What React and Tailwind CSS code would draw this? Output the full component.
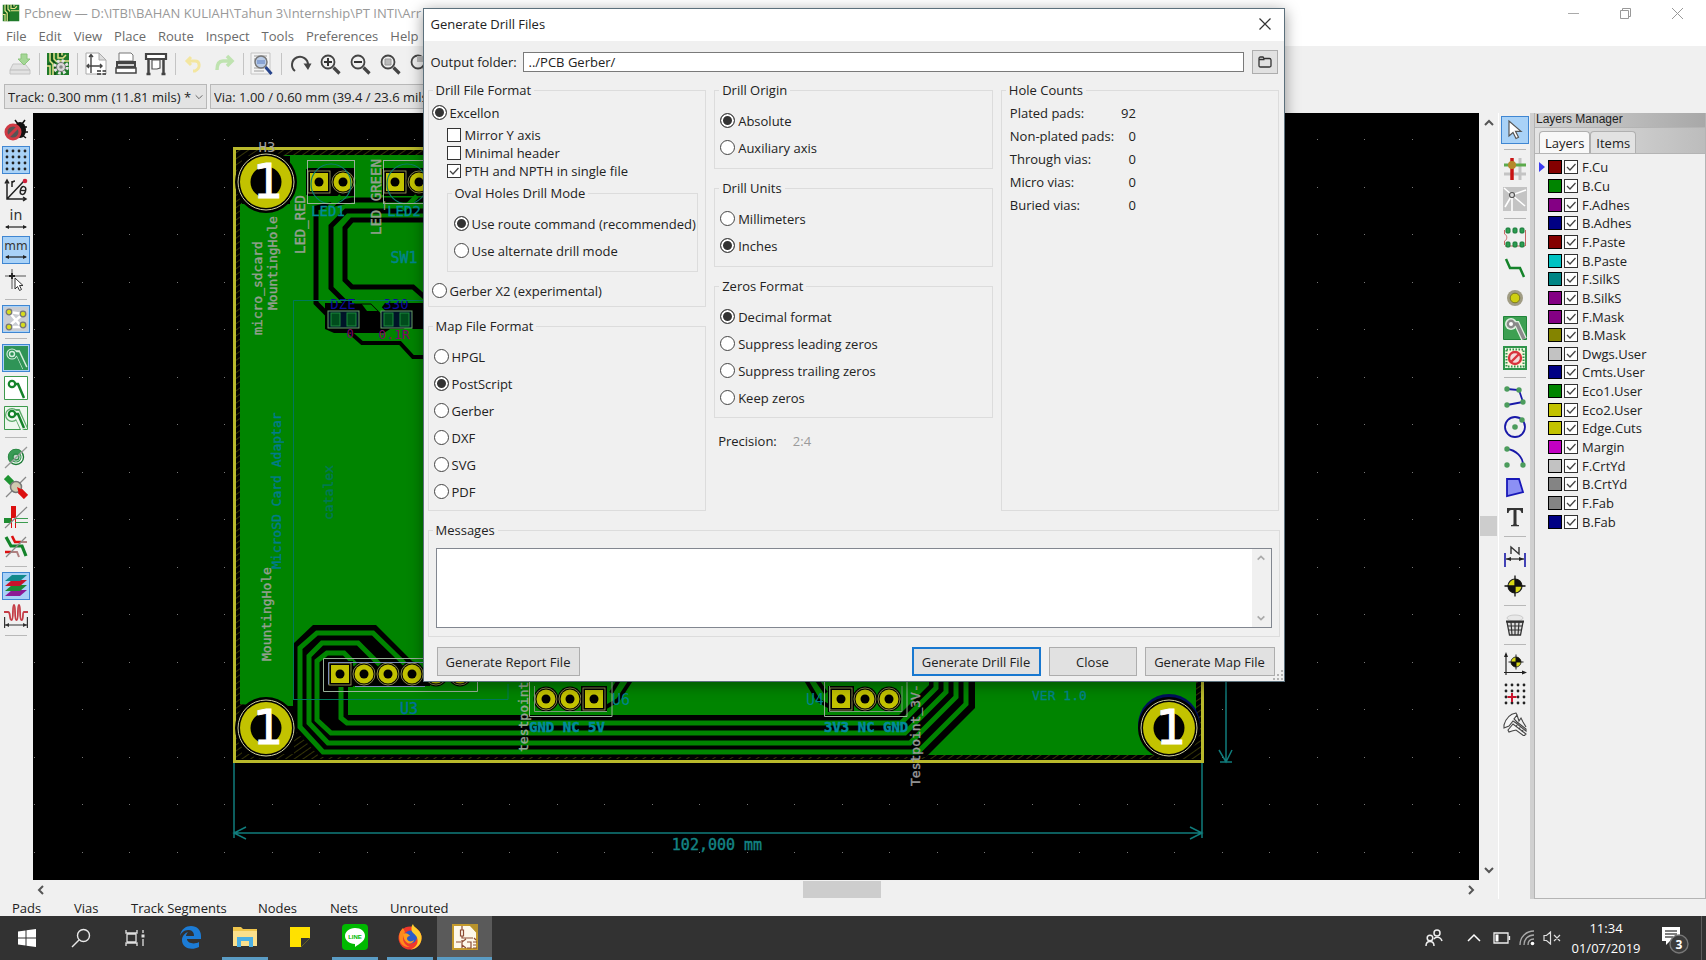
import React from 'react';

const FONT = 'font-["Open_Sans","Noto_Sans",sans-serif]';

/* ---------- shared bits ---------- */

function Icon({ children, className = 'h-6 w-6' }) {
  return (
    <svg viewBox="0 0 24 24" className={className} fill="none" aria-hidden="true">
      {children}
    </svg>
  );
}

function Chevron({ d, className = 'h-3 w-3', w = 2 }) {
  return (
    <svg viewBox="0 0 12 12" className={className} fill="none" stroke="currentColor" strokeWidth={w} aria-hidden="true">
      <path d={d} />
    </svg>
  );
}
const UP = 'M2 8l4-4 4 4';
const DOWN = 'M2 4l4 4 4-4';
const LEFT = 'M8 2L4 6l4 4';
const RIGHT = 'M4 2l4 4-4 4';

function CheckBox({ label, checked, name }) {
  return (
    <label className="flex items-center gap-1">
      <span className="grid shrink-0">
        <input
          type="checkbox"
          name={name}
          defaultChecked={checked}
          className="peer col-start-1 row-start-1 h-[14px] w-[14px] appearance-none border border-[#333] bg-white"
        />
        <svg
          viewBox="0 0 14 14"
          className="pointer-events-none invisible col-start-1 row-start-1 h-[14px] w-[14px] peer-checked:visible"
          fill="none"
          stroke="#444"
          strokeWidth="1.3"
          aria-hidden="true"
        >
          <path d="M3 7l3 3 5.500-6" />
        </svg>
      </span>
      <span>{label}</span>
    </label>
  );
}

function Radio({ label, name, checked }) {
  return (
    <label className="flex h-[27px] items-center gap-[3px]">
      <input
        type="radio"
        name={name}
        defaultChecked={checked}
        className="h-[15px] w-[15px] shrink-0 appearance-none rounded-full border border-[#444] bg-white checked:bg-[#333] checked:shadow-[inset_0_0_0_2px_#fff]"
      />
      <span className="whitespace-nowrap">{label}</span>
    </label>
  );
}

function Group({ title, className = '', bodyClass = '', children }) {
  return (
    <fieldset className={`border border-[#dcdcdc] ${className}`}>
      <legend className="ml-1 px-[3px] leading-5">{title}</legend>
      <div className={bodyClass}>{children}</div>
    </fieldset>
  );
}

/* ---------- toolbar icons ---------- */

const PcbArt = () => (
  <>
    <path fill="#1f7a2a" d="M1 1h22v22H1z" />
    <path stroke="#e6e08a" strokeWidth="1.500" d="M4 1v8l3 3v11M8 1v6l3 3M12 1v5h5l3-3M1 14h3v9M16 1v3M12 9h11" />
    <path stroke="#0c4514" strokeWidth="1.200" d="M6 1v7l3 3v12M14 1v3h3M2 12h3" />
  </>
);

const Gear = () => (
  <>
    <circle cx="15" cy="15" r="6" stroke="#e4e4e4" strokeWidth="3.500" strokeDasharray="2.600 2.100" />
    <circle cx="15" cy="15" r="4.500" fill="#d8d8d8" stroke="#777" />
    <circle cx="15" cy="15" r="1.800" fill="#888" />
  </>
);

const Lens = () => (
  <>
    <circle cx="10" cy="10" r="6.500" stroke="#444" strokeWidth="1.800" />
    <path stroke="#444" strokeWidth="3.200" d="M15.500 15.500l6 6" />
  </>
);

const topIcons = [
  ['Save board', <><path fill="#e2e2e2" stroke="#c4c4c4" d="M5 12h12l5 6v4H2v-4z" /><path stroke="#bbb" d="M2 18h20" /><path fill="#a5d796" stroke="#8cc47c" d="M13 2h6v5h3l-6 6-6-6h3z" /></>],
  null,
  ['Board setup', <><PcbArt /><Gear /></>],
  null,
  ['Page settings', <><path fill="#fff" stroke="#aaa" d="M2 1h13l7 7v14H2z" /><path fill="#ddd" stroke="#aaa" d="M15 1v7h7z" /><path stroke="#444" strokeWidth="1.400" d="M7 3v18M3 14h15M5 5l2-2.500L9 5M16 12l2 2-2 2M5 12l-2 2 2 2" /><path stroke="#333" strokeWidth="1.500" strokeDasharray="4 1.500" d="M13 19h9M13 22h9" /></>],
  ['Print', <><path fill="#fff" stroke="#777" d="M5 1h12l2 2v6H5z" /><path fill="#444" d="M2 9h20v7H2z" /><path fill="#fff" stroke="#444" strokeWidth="1.500" d="M2 16h20v5H2z" /><path stroke="#fff" strokeWidth="1.500" d="M4 13h16" /></>],
  ['Plot', <><path fill="#fff" stroke="#444" strokeWidth="2.200" d="M2 2h20v5H2z" /><path stroke="#444" strokeWidth="2.500" d="M4.500 8v14M19.500 8v14M2.500 22h4M17.500 22h4" /><path fill="#fff" stroke="#555" strokeWidth="1.200" d="M8 8h8v8l-3 1H8z" /></>],
  null,
  ['Undo', <path stroke="#f3e6a0" strokeWidth="3" d="M9 5L5 9l4 4M6 9h7c5 0 6 7 0 10h-2" />],
  ['Redo', <path stroke="#bfe3b0" strokeWidth="3.500" d="M15 4l5 5-5 5M19 9h-8c-5 0-6 4-6 9" />],
  null,
  ['Find', <><path fill="#f4f4f4" stroke="#c4c4c4" d="M1 1h19v21H1z" /><path stroke="#bbb" strokeWidth="1.500" d="M4 4h13M4 7h13M4 16h10M4 19h10" /><circle cx="11" cy="10" r="6" fill="#b9cbe6" stroke="#777" strokeWidth="1.500" /><path stroke="#5a7cc0" d="M7 9h8M7 11h8" /><path stroke="#27448c" strokeWidth="3" d="M15.500 15l6 7" /></>],
  null,
  ['Redraw', <><path stroke="#444" strokeWidth="2" d="M7 19A8 8 0 1 1 20 13" /><path fill="#444" d="M15.500 11.500h8L20 18z" /></>],
  ['Zoom in', <><Lens /><path stroke="#333" strokeWidth="2" d="M6 10h8M10 6v8" /></>],
  ['Zoom out', <><Lens /><path stroke="#333" strokeWidth="2" d="M6 10h8" /></>],
  ['Zoom to fit', <><Lens /><path fill="#bbb" stroke="#999" d="M7 7h6v6H7z" /></>],
  ['Zoom to selection', <><Lens /><path fill="#bbb" d="M9 4h6v6H9z" /></>],
];

const Dots = ({ cross }) => (
  <g fill="#222">
    {[3, 9, 15, 21].map((y) => [3, 9, 15, 21].map((x) => <circle key={`${x}-${y}`} cx={x} cy={y} r="1.400" />))}
    {cross && <path stroke="#c8142c" strokeWidth="2" d="M9 11v9M4.500 15h9" />}
  </g>
);

const ViaTrack = ({ c }) => (
  <>
    <path stroke={c} strokeWidth="2.500" d="M8 8h6l6 14" />
    <circle cx="8" cy="8" r="3.200" fill="#fff" stroke={c} strokeWidth="2.200" />
  </>
);

const leftIcons = [
  ['Design rule check', <><path stroke="#111" strokeWidth="1.500" d="M11 2l3 4M21 2l-3 4M23 9h-4M24 14h-4M22 20l-4-3" /><ellipse cx="16" cy="12" rx="6" ry="8" fill="#111" /><circle cx="9" cy="14" r="7" fill="#555" stroke="#d03a44" strokeWidth="3" /><path stroke="#d03a44" strokeWidth="3" d="M4.500 18.500l9-9" /></>],
  ['Grid', <Dots />, true],
  ['Polar coordinates', <><path stroke="#222" strokeWidth="1.500" d="M3 3v18h18M1 5.500L3 2l2 3.500M19 19l3 2-3 2M3 21L20 3" /><circle cx="21" cy="3" r="2.300" fill="#d0213a" /><path stroke="#222" strokeWidth="1.500" d="M8 3v6M8 5c1-2 2-2 3-2" /><ellipse cx="19" cy="12.500" rx="2.600" ry="4" stroke="#222" strokeWidth="1.500" transform="rotate(15 19 12.500)" /><path stroke="#222" strokeWidth="1.300" d="M16.500 12.500h5" /></>],
  ['Inches', <><text x="12" y="12" textAnchor="middle" fontSize="14" fill="#333" fontFamily="DejaVu Sans">in</text><path stroke="#222" strokeWidth="1.200" d="M2 19h20" /><path fill="#222" d="M1 19l4-2v4zM23 19l-4-2v4z" /></>],
  ['Millimeters', <><text x="12" y="12" textAnchor="middle" fontSize="12" fill="#333" fontFamily="DejaVu Sans">mm</text><path stroke="#222" strokeWidth="1.200" d="M2 19h20" /><path fill="#222" d="M1 19l4-2v4zM23 19l-4-2v4z" /></>, true],
  ['Cursor shape', <><path stroke="#555" strokeWidth="1" d="M1 8h21M8 1v20" /><path stroke="#222" strokeWidth="1.800" d="M5 8h6M8 5v6" /><path fill="#fff" stroke="#333" d="M11 10v11l2.500-2.500 2 4 2-1-2-4h3.500z" /></>],
  null,
  ['Ratsnest', <><path fill="#c9ccd2" d="M0 0h24v24H0z" /><path stroke="#fff" strokeWidth="2.500" d="M5 5l14 2M5 5l11 13M5 19l14-12M5 20h14" /><g fill="#d6dc1c" stroke="#777" strokeWidth="1.300"><circle cx="5" cy="5" r="2.800" /><circle cx="19" cy="7" r="2.800" /><circle cx="5" cy="20" r="2.800" /><circle cx="19" cy="18" r="2.800" /></g></>, true],
  null,
  ['Show filled zones', <><path fill="#2f9457" d="M0 0h24v24H0z" /><path stroke="#d7efdf" strokeWidth="5.500" d="M8 7h6l7 15" /><circle cx="8" cy="8" r="5.600" fill="#d7efdf" /><path stroke="#2f9457" strokeWidth="3.500" d="M8 8h6l7 15" /><circle cx="8" cy="8" r="4.500" fill="#2f9457" /><circle cx="8" cy="8" r="2.500" stroke="#d7efdf" strokeWidth="1.400" /></>, true],
  ['Hide filled zones', <><path fill="#fff" stroke="#3d9a4c" d="M.500.500h23v23H.500z" /><ViaTrack c="#14832a" /></>],
  ['Outline filled zones', <><path fill="#eef7ef" stroke="#3d9a4c" d="M.500.500h23v23H.500z" /><path stroke="#5aa868" strokeWidth="8" d="M9 7h4l7 16" /><circle cx="8" cy="9" r="7" fill="#5aa868" /><path stroke="#eef7ef" strokeWidth="6" d="M9 8h4l7 15" /><circle cx="8" cy="9" r="5.800" fill="#eef7ef" /><ViaTrack c="#14832a" /></>],
  null,
  ['Via sketch', <><circle cx="12" cy="12" r="7.500" fill="#fff" stroke="#1c7a35" strokeWidth="1.400" /><path fill="#3a9a55" d="M17.300 6.700A7.500 7.500 0 1 0 6.700 17.300z" /><circle cx="12" cy="12" r="5" stroke="#3a9a55" strokeWidth="1.200" /><circle cx="12" cy="12" r="3" fill="#bfe0c8" stroke="#2c8c48" strokeWidth="1.300" /><path stroke="#999" strokeWidth="1.300" d="M1 23L23 2" /></>],
  ['Track sketch', <><path stroke="#1e9432" strokeWidth="6" d="M2 2l7 7" /><path stroke="#dc1010" strokeWidth="6" d="M14 14l8 8" /><path stroke="#888" strokeWidth="1.200" d="M2 22L22 2" /><circle cx="12" cy="12" r="5.500" fill="#cfcab0" stroke="#777" strokeWidth="1.500" /><path fill="#dc1010" d="M13 12l6 3-4 4z" /></>],
  ['Contrast mode', <><path fill="#dc1010" d="M7 1h5v12H7z" /><path fill="#1e8c32" d="M0 13h7v5H0z" /><path stroke="#dc1010" d="M7.500 13v10M11.500 13v10" /><path stroke="#3c9c50" d="M11 13.500h13M11 17.500h13" /><path stroke="#888" strokeWidth="1.200" d="M1 23L23 2" /></>],
  ['Net highlight', <><path stroke="#14832a" strokeWidth="3.200" d="M2 2l5 9h11l4 10" /><path stroke="#dc1010" strokeWidth="2.600" d="M8 1l3 6h6M1 17h6" /><path stroke="#b08080" strokeWidth="2" d="M17 7h6M7 17h6l2 5" /><path stroke="#888" strokeWidth="1.200" d="M2 22L22 2" /></>],
  null,
  ['Layers manager', <><path fill="#8c1a96" d="M1 22l7-6h15l-7 6z" /><path fill="#1d8a34" d="M1 17l7-6h15l-7 6z" /><path fill="#c8142c" d="M1 12l7-6h15l-7 6z" /><path fill="#128a8c" d="M1 7l7-6h15l-7 6z" /></>, true],
  ['Microwave', <><path stroke="#c43c46" strokeWidth="1.800" d="M0 8h4c3 0 1 8 3.500 8S8 1 10 1s0 15 2.500 15S13 1 15 1s0 15 2.500 15S18 8 20 8h4" /><path stroke="#333" strokeWidth="1.200" d="M.600 13v11M23.400 13v11M1 21h22" /><path fill="#333" d="M1 21l4-2v4zM23 21l-4-2v4z" /></>],
  null,
];

const Target = ({ cx = 12, cy = 12, r = 7 }) => (
  <g transform={`translate(${cx} ${cy}) scale(${r / 7})`}>
    <circle r="7" fill="#d9d916" stroke="#222" strokeWidth="1.200" />
    <path fill="#111" d="M0 0V-7A7 7 0 0 1 7 0zM0 0V7A7 7 0 0 1-7 0z" />
    <path stroke="#111" strokeWidth="1.300" d="M-10.500 0h21M0-10.500v21" />
  </g>
);

const rightIcons = [
  ['Select', <path fill="#fff" stroke="#555" strokeWidth="1.200" d="M6 3v15l4-3.500 3 6 2.500-1.200-3-6H18z" />, true],
  null,
  ['Highlight net', <><path stroke="#c4c4c4" strokeWidth="3" d="M17 1v22M1 17h22" /><path stroke="#c81414" strokeWidth="3.500" d="M9 1v22" /><path stroke="#5caa4c" strokeWidth="3" d="M1 8h22" /><circle cx="9" cy="8" r="4" fill="#b58a2c" /></>],
  ['Local ratsnest', <><path fill="#c4c4c4" d="M0 0h24v24H0z" /><path stroke="#fff" strokeWidth="1.600" d="M9 8L1 1M9 8l14-5M9 8l13 11M9 8v16M9 8L2 20" /><circle cx="9" cy="8" r="2.500" fill="#ddd" stroke="#555" strokeWidth="1.200" /></>],
  null,
  ['Add footprint', <><path stroke="#c86464" d="M1.500 4v4c3 1 3 6 0 7v4M22.500 4v16M2 20h20" /><g fill="#2c9c50" stroke="#187838"><rect x="3" y="2" width="4" height="5" rx="1" /><rect x="10" y="2" width="4" height="5" rx="1" /><rect x="17" y="2" width="4" height="5" rx="1" /><rect x="3" y="16" width="4" height="5" rx="1" /><rect x="10" y="16" width="4" height="5" rx="1" /><rect x="17" y="16" width="4" height="5" rx="1" /></g></>],
  ['Route tracks', <path stroke="#14832a" strokeWidth="2.500" d="M3 3l4 9h10l4 9" />],
  ['Add via', <><circle cx="12" cy="12" r="8" fill="#a09c84" /><circle cx="12" cy="12" r="4.800" fill="#cfcf10" stroke="#7c7a20" /></>],
  ['Add zone', <><path fill="#3da052" stroke="#1f8438" d="M.500.500h23v23H.500z" /><path stroke="#dff0e0" strokeWidth="6" d="M8 8h6l7 15" /><circle cx="8" cy="8" r="6" fill="#dff0e0" /><path stroke="#8a8a8a" strokeWidth="3.500" d="M8 8h6l7 15" /><circle cx="8" cy="8" r="3.200" fill="#fff" stroke="#8a8a8a" strokeWidth="2.400" /></>],
  ['Add keepout', <><path fill="#e8f5e0" stroke="#2f944a" strokeWidth="2" d="M1 1h22v22H1z" /><path fill="#fdf6dc" stroke="#2f944a" strokeWidth="2" strokeDasharray="1.500 1.500" d="M3.500 3.500h17v17h-17z" /><circle cx="12" cy="12" r="6" fill="#f4dada" stroke="#d8343c" strokeWidth="2.400" /><path stroke="#d8343c" strokeWidth="2.400" d="M8 16l8-8" /></>],
  null,
  ['Add line', <><path stroke="#1818a8" strokeWidth="1.800" d="M4 4l12 1 4 12-16 3" /><g fill="#4c9c5c"><circle cx="4" cy="4" r="2.700" /><circle cx="16" cy="5" r="2.700" /><circle cx="20" cy="17" r="2.700" /><circle cx="4" cy="20" r="2.700" /></g></>],
  ['Add circle', <><circle cx="12" cy="12" r="10" stroke="#1818a8" strokeWidth="1.800" /><circle cx="12" cy="12" r="2.800" fill="#4c9c5c" /><circle cx="19" cy="5" r="2.700" fill="#4c9c5c" /></>],
  ['Add arc', <><path stroke="#1818a8" strokeWidth="1.800" d="M4 4c9 1 16 8 16 16" /><g fill="#4c9c5c"><circle cx="4" cy="4" r="2.700" /><circle cx="4" cy="20" r="2.700" /><circle cx="20" cy="20" r="2.700" /></g></>],
  ['Add polygon', <path fill="#8c90f4" stroke="#1818b8" strokeWidth="1.800" d="M4 4h12l4 13-16 4z" />],
  ['Add text', <path fill="#333" d="M4 3h16v5h-1.500c-.500-2-1-3-3-3H13.500v13.500c0 1 .500 1.500 2.500 1.500v1.300H8V20c2 0 2.500-.500 2.500-1.500V5H8.500c-2 0-2.500 1-3 3H4z" />],
  null,
  ['Add dimension', <><path stroke="#1818a8" strokeWidth="1.600" d="M2 9v14M22 9v14" /><path stroke="#222" strokeWidth="1.200" d="M3 15h18" /><path fill="#222" d="M3 15l5-2v4zM21 15l-5-2v4z" /><path stroke="#333" strokeWidth="1.400" d="M8 10V3l8 7V3" /></>],
  ['Add target', <Target />],
  null,
  ['Delete', <><ellipse cx="12" cy="5" rx="8" ry="3" fill="#e8e8e8" stroke="#ccc" /><path fill="#ddd" stroke="#333" strokeWidth="1.300" d="M4 9h16l-2.500 13h-11z" /><path stroke="#333" strokeWidth="1.200" d="M8 9l1 13M12 9v13M16 9l-1 13M5 13h14M6 17h12" /><path stroke="#333" strokeWidth="2" d="M3 8.500h18" /></>],
  null,
  ['Drill origin', <><path stroke="#222" strokeWidth="1.200" d="M3 2v21M1 20.500h21" /><path fill="#222" d="M3 0l2 5H1zM24 20.500l-5-2v4z" /><Target cx={13} cy={10} r={5} /></>],
  ['Grid origin', <Dots cross />],
  ['Measure', <path fill="#f6f6f6" stroke="#444" strokeWidth="1.100" d="M1 13C3 6 7 2 13 1l1 2-3 4 3 3 9 7v2l-10-8-3-2-4 5-5 2zM14 3l2 6 2-3 2 4 3 5M5 18l5-6 13 10-2 2-8-6-4 1-3 1zM14 13l-1 2M17 15.500l-1 2M20 18l-1 2" />],
];

function SideBar({ items, label }) {
  return (
    <nav aria-label={label} className="flex flex-col items-center pt-0.5">
      {items.map((it, i) =>
        it ? (
          <button
            key={i}
            type="button"
            aria-label={it[0]}
            className={`my-px flex h-7 w-7 shrink-0 items-center justify-center border ${it[2] ? 'border-[#3f86d2] bg-[#a9d2f7]' : 'border-transparent'}`}
          >
            <Icon className="h-6 w-6 shrink-0">{it[1]}</Icon>
          </button>
        ) : (
          <span key={i} className="flex h-[9px] shrink-0 items-center">
            <span className="h-px w-[22px] bg-[#b8b8b8]" />
          </span>
        ),
      )}
    </nav>
  );
}

/* ---------- board canvas ---------- */

const HOLE_FONT = '"DejaVu Sans", sans-serif';
const MONO = '"DejaVu Sans Mono", monospace';

function MountHole({ cx, cy }) {
  return (
    <g>
      <circle cx={cx} cy={cy} r="31" fill="#000" />
      <circle cx={cx} cy={cy} r="28" fill="none" stroke="#cfcfa0" strokeWidth="1" />
      <circle cx={cx} cy={cy} r="26" fill="#c2c200" />
      <circle cx={cx} cy={cy} r="15.500" fill="#000" />
      <text x={cx + 2} y={cy + 16} textAnchor="middle" fontSize="48" fill="#fff" stroke="#fff" strokeWidth=".8" fontFamily={HOLE_FONT}>1</text>
    </g>
  );
}

function Pad({ cx, cy, square }) {
  return (
    <g>
      {square ? (
        <>
          <rect x={cx - 13} y={cy - 13} width="26" height="26" fill="#000" />
          <rect x={cx - 11} y={cy - 11} width="22" height="22" fill="none" stroke="#a8a860" strokeWidth=".8" />
          <rect x={cx - 9} y={cy - 9} width="18" height="18" fill="#c2c200" />
        </>
      ) : (
        <>
          <circle cx={cx} cy={cy} r="12.500" fill="#000" />
          <circle cx={cx} cy={cy} r="11" fill="none" stroke="#a8a860" strokeWidth=".8" />
          <circle cx={cx} cy={cy} r="9.500" fill="#c2c200" />
        </>
      )}
      <circle cx={cx} cy={cy} r="4.500" fill="#000" />
    </g>
  );
}

function VText({ x, y, children, fill = '#94a090', size = 13 }) {
  return (
    <text
      transform={`translate(${x} ${y}) rotate(-90)`}
      fontSize={size}
      fill={fill}
      stroke={fill}
      strokeWidth=".4"
      fontFamily={MONO}
    >
      {children}
    </text>
  );
}

function gridDots() {
  const out = [];
  for (let r = 0; r < 16; r += 1) {
    for (let c = 0; c < 31; c += 1) {
      out.push(<rect key={`${r}-${c}`} x={Math.round(34 + c * 47.5)} y={Math.round(139 + r * 47.5)} width="1" height="1" />);
    }
  }
  return out;
}

function Board() {
  return (
    <svg
      viewBox="33 113 1446 767"
      preserveAspectRatio="xMinYMin slice"
      className="block h-full min-h-0 w-full min-w-0 bg-black"
      role="img"
      aria-label="Printed circuit board"
    >
      <defs>
        <pattern id="hatch" width="5" height="5" patternUnits="userSpaceOnUse" patternTransform="rotate(-35)">
          <path d="M0 0h5" stroke="#6a6a10" strokeWidth="1" />
        </pattern>
      </defs>
      <g fill="#777">{gridDots()}</g>

      <rect x="234" y="148" width="969" height="613" fill="#000" />
      <rect x="236" y="150" width="965" height="609" fill="url(#hatch)" />
      <path d="M285 155H1196V714L1170 755H322L296 728V710L240 704V205Z" fill="#008400" />
      <path d="M242 156h48v48h-48zM242 706h52v48h-52z" fill="#000" />
      <rect x="234.500" y="148.500" width="968" height="613" fill="none" stroke="#b9b92c" strokeWidth="3" />

      {/* LED traces */}
      <g fill="none" stroke="#000" strokeWidth="5">
        <path d="M430 200H352L316 208V303L330 317" />
        <path d="M430 211H346L331 226V288L345 302H372L386 316" />
        <path d="M430 220H352L345 228V280L352 287H413L430 302" />
        <path d="M345 328L362 343H400L413 357H430" strokeWidth="4" />
      </g>
      <path d="M325 303h36l6 8h12l6-8h45v26h-40l-6 4h-50l-9-4z" fill="#000" />
      <path d="M352 301h20l14 14M404 325l14 12h12" fill="none" stroke="#008400" strokeWidth="5" />
      {[343, 396].map((x) => (
        <g key={x}>
          <rect x={x - 15} y="311" width="31" height="17" fill="#001428" stroke="#6aa06a" strokeWidth="1" />
          <rect x={x - 12} y="313" width="9" height="13" fill="#004c1c" stroke="#1c8c3c" />
          <rect x={x + 4} y="313" width="9" height="13" fill="#004c1c" stroke="#1c8c3c" />
          <text x={x} y="309" textAnchor="middle" fontSize="14" fill="#0c0c9c" fontFamily={MONO}>{x === 343 ? 'DZE' : '330'}</text>
        </g>
      ))}
      <text x="350" y="338" textAnchor="middle" fontSize="12" fill="#84006c" fontFamily={MONO}>0</text>
      <text x="394" y="339" textAnchor="middle" fontSize="13" fill="#84006c" fontFamily={MONO}>0.1R</text>

      {[331, 407].map((x) => (
        <g key={x}>
          <path d={`M${x - 24} 168h48v28h-48z`} fill="#000" />
          <Pad cx={x - 12} cy={182} square />
          <Pad cx={x + 12} cy={182} />
          <circle cx={x} cy="184" r="20" fill="none" stroke="#0c7c6c" strokeWidth="1.200" />
          <path d={`M${x + 10} 196l-14 14`} stroke="#008400" strokeWidth="5" />
          <rect x={x - 23.5} y="160.500" width="47" height="43" fill="none" stroke="#9ab09a" />
          <text x={x - 3} y="216" textAnchor="middle" fontSize="14" fill="#008c9c" stroke="#008c9c" strokeWidth=".3" fontFamily={MONO}>{x === 331 ? 'LED1' : 'LED2'}</text>
        </g>
      ))}
      <text x="404" y="263" textAnchor="middle" fontSize="15" fill="#00848c" stroke="#00848c" strokeWidth=".4" fontFamily={MONO}>SW1</text>

      {/* U3 bus: clearance area, then the four tracks inside it */}
      <path
        d="M293 644L313 625H376L430 679V686H348V715H899L929 685V680H975V708L926 757H320L293 728Z"
        fill="#000"
      />
      <g fill="none" stroke="#008400" strokeWidth="5">
        <path d="M341 680V718L347 723H901L936 688V680" />
        <path d="M364 673L344 653H327L317 661V720L331 733H905L946 692V680" />
        <path d="M388 673L358 643H322L309 656V723L328 743H910L956 697V680" />
        <path d="M412 671L373 633H317L300 648V727L323 752H918L966 704V680" />
      </g>
      <path d="M631 680L618 700L606 707M619 680L611 693M806 680L818 700L830 707M817 680L826 693" fill="none" stroke="#000" strokeWidth="4" />
      <path d="M293.500 699.500V300.500H430M293 699.500H508V684" fill="none" stroke="#00785c" />

      <Pad cx={340} cy={674} square />
      {[364, 388, 412, 436, 460].map((x) => <Pad key={x} cx={x} cy={674} />)}
      <path d="M323.500 658.500h154v33h-154z" fill="none" stroke="#9ab09a" />
      <path d="M328.500 662.500h150M328.500 662.500v22M355 686.500h70" fill="none" stroke="#7a8cb8" />
      <text x="409" y="714" textAnchor="middle" fontSize="15" fill="#00709c" stroke="#00709c" strokeWidth=".4" fontFamily={MONO}>U3</text>

      {/* test points */}
      <path d="M529.500 680V716.500H612V680M824.500 680V716.500H907V680" fill="none" stroke="#9ab09a" />
      <Pad cx={546} cy={699} />
      <Pad cx={570} cy={699} />
      <Pad cx={594} cy={699} square />
      <Pad cx={841} cy={699} square />
      <Pad cx={865} cy={699} />
      <Pad cx={889} cy={699} />
      <path d="M534.500 686V711.500H607M829.500 686V711.500H902V686" fill="none" stroke="#7c9c7c" />
      <g fontFamily={MONO} fill="#00848c">
        <text x="612" y="705" fontSize="15">U6</text>
        <text x="806" y="705" fontSize="15">U4</text>
        <text x="529" y="732" fontSize="14" fontWeight="bold" fill="#008c9c" stroke="#008c9c" strokeWidth=".5">GND NC 5V</text>
        <text x="824" y="732" fontSize="14" fontWeight="bold" fill="#008c9c" stroke="#008c9c" strokeWidth=".5">3V3 NC GND</text>
        <text x="1032" y="700" fontSize="13" stroke="#00848c" strokeWidth=".3">VER 1.0</text>
      </g>

      <MountHole cx={266} cy={182} />
      <MountHole cx={266} cy={728} />
      <circle cx="1169" cy="725" r="31" fill="#00105c" />
      <MountHole cx={1169} cy={728} />

      <text x="267" y="152" textAnchor="middle" fontSize="14" fill="#a0a0a0" fontFamily={MONO}>H3</text>
      <VText x={262} y={335}>micro_sdcard</VText>
      <VText x={277} y={310}>MountingHole</VText>
      <VText x={305} y={254} size={14}>LED_RED</VText>
      <VText x={381} y={235} size={14}>LED_GREEN</VText>
      <VText x={271} y={661}>MountingHole</VText>
      <VText x={281} y={569} fill="#007c8c">MicroSD Card Adaptar</VText>
      <VText x={333} y={520} fill="#00785a">catalex</VText>
      <VText x={528} y={752} fill="#94a894">testpoint</VText>
      <VText x={920} y={786} fill="#9a9a9a">Testpoint_3V-</VText>

      {/* dimensions */}
      <g fill="none" stroke="#107c7c" strokeWidth="1.500">
        <path d="M234 763V838M1202 763V838M234 833H1202M246 827L234 833L246 839M1190 827L1202 833L1190 839" />
        <path d="M1226 680V762M1220 762H1232M1219 750L1226 762L1232 750" />
      </g>
      <text x="717" y="850" textAnchor="middle" fontSize="15" fill="#148484" stroke="#148484" strokeWidth=".4" fontFamily={MONO}>102,000 mm</text>
    </svg>
  );
}

/* ---------- layers manager ---------- */

const layers = [
  ['F.Cu', 'bg-[#840000]'],
  ['B.Cu', 'bg-[#008400]'],
  ['F.Adhes', 'bg-[#840084]'],
  ['B.Adhes', 'bg-[#000084]'],
  ['F.Paste', 'bg-[#840000]'],
  ['B.Paste', 'bg-[#00c2c2]'],
  ['F.SilkS', 'bg-[#008484]'],
  ['B.SilkS', 'bg-[#840084]'],
  ['F.Mask', 'bg-[#840084]'],
  ['B.Mask', 'bg-[#848400]'],
  ['Dwgs.User', 'bg-[#c2c2c2]'],
  ['Cmts.User', 'bg-[#000084]'],
  ['Eco1.User', 'bg-[#008400]'],
  ['Eco2.User', 'bg-[#c2c200]'],
  ['Edge.Cuts', 'bg-[#c2c200]'],
  ['Margin', 'bg-[#c200c2]'],
  ['F.CrtYd', 'bg-[#c2c2c2]'],
  ['B.CrtYd', 'bg-[#848484]'],
  ['F.Fab', 'bg-[#848484]'],
  ['B.Fab', 'bg-[#000084]'],
];

function LayersManager() {
  return (
    <aside className="flex w-[176px] shrink-0 flex-col border-l-4 border-[#d0d0d0]">
      <div className="flex min-h-0 flex-1 flex-col border border-t-0 border-[#b4b4b4]">
        <h2 className='h-[14px] bg-gradient-to-r from-[#d4d4d4] to-[#a8a8a8] pl-px font-["Liberation_Sans",sans-serif] text-[12px] leading-[13px] text-[#222]'>
          Layers Manager
        </h2>
        <div className="flex h-[27px] items-end border-t border-b border-[#b4b4b4] bg-gradient-to-r from-[#e4e4e4] to-[#bcbcbc] pl-1">
          <button type="button" className="h-[22px] rounded-t-sm border border-b-0 border-[#b0b0b0] bg-[#f8f8f8] px-[5px] leading-[18px]">
            Layers
          </button>
          <button type="button" className="h-[22px] rounded-t-sm border border-b-0 border-[#b0b0b0] bg-[#e2e2e2] px-[5px] leading-[18px]">
            Items
          </button>
        </div>
        <ul className="mt-1 grid h-[373px] auto-rows-fr">
          {layers.map(([name, color], i) => (
            <li key={name} className="flex items-center gap-0.5 pl-1">
              <span className="w-[7px]">
                {i === 0 && (
                  <svg viewBox="0 0 6 10" className="h-[10px] w-[6px]" aria-hidden="true">
                    <path d="M0 0l6 5-6 5z" fill="#3c3cf0" />
                  </svg>
                )}
              </span>
              <span className={`h-[14px] w-[14px] border border-black ${color}`} />
              <CheckBox label={name} checked name={name} />
            </li>
          ))}
        </ul>
      </div>
    </aside>
  );
}

/* ---------- drill dialog ---------- */

const counts = [
  ['Plated pads:', 92],
  ['Non-plated pads:', 0],
  ['Through vias:', 0],
  ['Micro vias:', 0],
  ['Buried vias:', 0],
];

function PushButton({ children, className, primary }) {
  return (
    <button
      type="button"
      className={`h-[29px] bg-[#e1e1e1] text-center ${primary ? 'border-2 border-[#1878d0]' : 'border border-[#adadad]'} ${className}`}
    >
      {children}
    </button>
  );
}

function DrillDialog() {
  return (
    <section
      role="dialog"
      aria-labelledby="dialog-title"
      className="w-[862px] border border-[#5c707c] bg-[#f0f0f0] shadow-[0_3px_14px_rgba(0,0,0,0.4)]"
    >
      <header className="flex h-8 items-center justify-between bg-white pr-[13px] pb-0.5 pl-[7px]">
        <h1 id="dialog-title">Generate Drill Files</h1>
        <button type="button" aria-label="Close dialog">
          <svg viewBox="0 0 12 12" className="h-3 w-3" stroke="#333" strokeWidth="1.200" aria-hidden="true">
            <path d="M.5.5l11 11M11.500.5l-11 11" />
          </svg>
        </button>
      </header>

      <div className="px-1 pt-[9px] pb-[5px]">
        <div className="flex items-center pr-[2px] pl-[3px]">
          <label htmlFor="folder" className="w-[92px]">Output folder:</label>
          <input
            id="folder"
            type="text"
            defaultValue="../PCB Gerber/"
            className="h-5 min-w-0 flex-1 border border-[#7a7a7a] bg-white px-[5px]"
          />
          <button type="button" aria-label="Browse" className="ml-2 flex h-[24px] w-[26px] items-center justify-center border border-[#adadad] bg-[#e1e1e1]">
            <svg viewBox="0 0 14 12" className="h-3 w-[14px]" fill="none" stroke="#333" strokeWidth="1.300" aria-hidden="true">
              <path d="M1 2.500q0-1.500 1.500-1.500h2.500l1 1.500h5.500q1.500 0 1.500 1.500v5.500q0 1.500-1.500 1.500h-9q-1.500 0-1.500-1.500zM1.500 3.500h5" />
            </svg>
          </button>
        </div>

        <div className="mt-1.5 grid grid-cols-3 gap-2">
          <div className="flex flex-col gap-[9px]">
            <Group title="Drill File Format" bodyClass="pl-[3px] pb-0.5">
              <div className="-mt-px"><Radio name="format" label="Excellon" checked /></div>
              <div className="flex flex-col pr-[7px] pl-[15px]">
                <div className="flex h-[18px] items-center"><CheckBox name="mirror" label="Mirror Y axis" /></div>
                <div className="flex h-[18px] items-center"><CheckBox name="minimal" label="Minimal header" /></div>
                <div className="flex h-[18px] items-center"><CheckBox name="single" label="PTH and NPTH in single file" checked /></div>
                <Group title="Oval Holes Drill Mode" className="mt-[3px]" bodyClass="pt-[7px] pb-[7px] pl-1.5">
                  <Radio name="oval" label="Use route command (recommended)" checked />
                  <Radio name="oval" label="Use alternate drill mode" />
                </Group>
              </div>
              <div className="mt-[5px]"><Radio name="format" label="Gerber X2 (experimental)" /></div>
            </Group>
            <Group title="Map File Format" className="flex-1" bodyClass="pt-[7px] pb-[5px] pl-[5px]">
              {['HPGL', 'PostScript', 'Gerber', 'DXF', 'SVG', 'PDF'].map((t) => (
                <Radio key={t} name="map" label={t} checked={t === 'PostScript'} />
              ))}
            </Group>
          </div>

          <div className="flex flex-col gap-[9px]">
            <Group title="Drill Origin" bodyClass="py-[7px] pl-[5px]">
              <Radio name="origin" label="Absolute" checked />
              <Radio name="origin" label="Auxiliary axis" />
            </Group>
            <Group title="Drill Units" bodyClass="py-[7px] pl-[5px]">
              <Radio name="units" label="Millimeters" />
              <Radio name="units" label="Inches" checked />
            </Group>
            <Group title="Zeros Format" bodyClass="pt-[7px] pb-1.5 pl-[5px]">
              <Radio name="zeros" label="Decimal format" checked />
              <Radio name="zeros" label="Suppress leading zeros" />
              <Radio name="zeros" label="Suppress trailing zeros" />
              <Radio name="zeros" label="Keep zeros" />
            </Group>
            <p className="mt-[5px] flex gap-4 pl-1">
              <span>Precision:</span>
              <span className="text-[#9a9a9a]">2:4</span>
            </p>
          </div>

          <Group title="Hole Counts" bodyClass="pt-px pl-2">
            <table className="w-[126px]">
              <tbody>
                {counts.map(([k, v]) => (
                  <tr key={k} className="h-[23px]">
                    <th scope="row" className="p-0 text-left font-normal whitespace-nowrap">{k}</th>
                    <td className="p-0 text-right">{v}</td>
                  </tr>
                ))}
              </tbody>
            </table>
          </Group>
        </div>

        <Group title="Messages" className="mt-[9px]" bodyClass="px-[7px] py-2">
          <div className="flex h-20 border border-[#828790] bg-white">
            <textarea aria-label="Messages" readOnly className="min-w-0 flex-1 resize-none" />
            <div className="flex w-[19px] flex-col items-center justify-between bg-[#f0f0f0] py-1 text-[#aaa]">
              <Chevron d={UP} className="h-[10px] w-[10px]" />
              <Chevron d={DOWN} className="h-[10px] w-[10px]" />
            </div>
          </div>
        </Group>

        <div className="mt-[10px] flex gap-2 pr-1 pl-[9px]">
          <PushButton className="mr-auto w-[143px]">Generate Report File</PushButton>
          <PushButton primary className="w-[129px]">Generate Drill File</PushButton>
          <PushButton className="w-[88px]">Close</PushButton>
          <PushButton className="mr-px w-[130px]">Generate Map File</PushButton>
        </div>
      </div>

      <svg viewBox="0 0 10 10" className="absolute right-0.5 bottom-0.5 h-[10px] w-[10px]" fill="#b4b4b4" aria-hidden="true">
        <path d="M8 0h2v2H8zM8 4h2v2H8zM4 4h2v2H4zM8 8h2v2H8zM4 8h2v2H4zM0 8h2v2H0z" />
      </svg>
    </section>
  );
}

/* ---------- taskbar ---------- */

const sys = [
  ['Start', <svg viewBox="0 0 18 18" className="h-[18px] w-[18px]" fill="#fff"><path d="M0 2.500L7.500 1.500V8.500H0zM8.500 1.300L18 0V8.500H8.500zM0 9.500H7.500V16.500L0 15.500zM8.500 9.500H18V18L8.500 16.700z" /></svg>],
  ['Search', <svg viewBox="0 0 20 20" className="h-5 w-5" fill="none" stroke="#e8e8e8" strokeWidth="1.400"><circle cx="12.500" cy="7.500" r="6" /><path d="M8 12L1 19" /></svg>],
  ['Task view', <svg viewBox="0 0 20 18" className="h-[18px] w-5" fill="none" stroke="#e0e0e0" strokeWidth="1.300"><path d="M1 1v3h11V1M2 5v8M11 5v8M1 17v-3h11v3M2 5h9M2 13h9M18 1v3M18 10v7" /><path d="M16.500 7h3" strokeWidth="3" /></svg>],
];

const apps = [
  ['Edge', false, <svg viewBox="0 0 24 24" className="h-6 w-6"><path fill="#1c7cd6" d="M2 11C3 4 8 1 13 1c6 0 10 4 10 10v3H9c0 4 7 6 12 3v5C13 26 4 23 4 15c0-4 3-7 6-8-1 1-2 3-2 4h8c0-5-3-6-6-6-4 0-7 3-8 6z" /></svg>],
  ['File Explorer', 'plain', <svg viewBox="0 0 26 22" className="h-[22px] w-[26px]"><path fill="#f0c64c" d="M1 1h8l2 2h14v6H1z" /><path fill="#fbe08c" d="M1 5h24v15H1z" /><path fill="#4cb0e4" d="M5 11h16v10h-4v-6H9v6H5z" /></svg>],
  ['Sticky Notes', false, <svg viewBox="0 0 20 20" className="h-5 w-5"><path fill="#ffe100" d="M0 0h20v11l-9 9H0z" /><path fill="#333" d="M11 11h9l-9 9z" /></svg>],
  ['LINE', 'plain', <svg viewBox="0 0 26 26" className="h-[26px] w-[26px]"><rect width="26" height="26" rx="4" fill="#00b900" /><path fill="#fff" d="M13 4c6 0 10 3.500 10 8 0 5-6 8-10 11v-3C7 20 3 16 3 12s4-8 10-8z" /><text x="13" y="14.500" textAnchor="middle" fontSize="6" fontWeight="bold" fill="#00b900" fontFamily="Liberation Sans">LINE</text></svg>],
  ['Firefox', 'plain', <svg viewBox="0 0 26 26" className="h-[26px] w-[26px]"><circle cx="13" cy="14" r="11.500" fill="#f0382c" /><path fill="#ff8a1c" d="M3 8c1-2 2-3 3-4l2 4c-4 5-2 13 5 15-7 1-13-5-10-15z" /><circle cx="13.500" cy="13" r="6.500" fill="#2c5cc8" /><path fill="#ffcc2c" d="M16 0c0 3 7 5 8.500 12 1 7-4 13-11 13.500 8-3 8-9 6-13-2-3-5-4-5-7 0-2 0-4 1.500-5.500z" /><path fill="#ff9c1c" d="M6 10c3-2 6 0 7 2-2 0-3 1-3 3 1 3 5 3 7 1-1 5-10 6-11-6z" /></svg>],
  ['KiCad', 'active', <svg viewBox="0 0 28 28" className="h-7 w-7"><path fill="#fdf8ea" stroke="#c49a2c" strokeWidth="2" d="M2 2h18l6 7v17H2z" /><path fill="#b8932c" d="M17 1h10v10z" /><path fill="none" stroke="#8c4c34" strokeWidth="1.200" d="M11 3v4M9.500 7h3v6h-3zM11 13v2h11M5 19h5M11 17v8M11 19l4-3M11 22l4 3M16 19h4v6h-4M22 19h4M22 22h3M22 25h4M23 15l2 2" /></svg>],
];

function Taskbar() {
  return (
    <footer className="flex h-11 shrink-0 items-stretch bg-[#323232] text-white">
      {sys.map(([n, art]) => (
        <button key={n} type="button" aria-label={n} className="flex w-[54px] items-center justify-center">{art}</button>
      ))}
      {apps.map(([n, state, art]) => (
        <button
          key={n}
          type="button"
          aria-label={n}
          className={`flex w-[55px] flex-col items-center ${state === 'active' ? 'bg-[#5a5a5a]' : ''}`}
        >
          <span className="flex flex-1 items-center">{art}</span>
          <span className={`h-[3px] ${state ? 'bg-[#5a9cc4]' : ''} ${state === 'active' ? 'w-full' : 'w-[46px]'}`} />
        </button>
      ))}
      <div className="ml-auto flex items-center">
        <svg viewBox="0 0 18 18" className="mr-[22px] h-[18px] w-[18px]" fill="none" stroke="#eee" strokeWidth="1.500" aria-hidden="true">
          <circle cx="5" cy="9" r="2.800" /><circle cx="12" cy="4" r="3" /><path d="M1 17c0-6 8-6 8 0M9 10c2-3 7-2 8 2" />
        </svg>
        <Chevron d={UP} w={1} className="mr-2.5 h-[18px] w-[18px]" />
        <svg viewBox="0 0 18 12" className="mr-2 h-3 w-[18px]" fill="none" stroke="#eee" strokeWidth="1.300" aria-hidden="true">
          <path d="M1 1h14v10H1zM16.500 4v4" /><path fill="#fff" stroke="none" d="M2.500 2.500h3v7h-3z" />
        </svg>
        <svg viewBox="0 0 16 16" className="mr-2 h-4 w-4" fill="none" stroke="#aaa" strokeWidth="1.300" aria-hidden="true">
          <path d="M1 15C1 7 7 1 15 1M5 15c0-6 4-10 10-10M9 15c0-4 2-6 6-6" /><circle cx="13.500" cy="13.500" r="1.800" fill="#fff" stroke="none" />
        </svg>
        <svg viewBox="0 0 18 14" className="mr-2.5 h-[14px] w-[18px]" fill="none" stroke="#ddd" strokeWidth="1.200" aria-hidden="true">
          <path d="M1 4.500h2.500l4-3.500v12l-4-3.500H1zM11 4l6 6M17 4l-6 6" />
        </svg>
        <div className="w-[70px] text-center leading-5">
          <div>11:34</div>
          <div>01/07/2019</div>
        </div>
        <button type="button" aria-label="Notifications" className="mr-2.5 ml-[18px] h-8 w-8">
          <svg viewBox="0 0 32 32" className="h-8 w-8" aria-hidden="true">
            <path fill="#fff" d="M3 5h18v14H11l-4 4v-4H3z" /><path stroke="#555" strokeWidth="1.400" d="M6 9h12M6 12h12M6 15h8" />
            <circle cx="20" cy="22" r="9" fill="#3c3c3c" stroke="#777" strokeWidth="1.400" />
            <text x="20" y="26.500" textAnchor="middle" fontSize="12" fontWeight="bold" fill="#fff" fontFamily="Open Sans">3</text>
          </svg>
        </button>
        <span className="mr-1 h-11 w-px bg-[#5c5c5c]" />
      </div>
    </footer>
  );
}

/* ---------- page ---------- */

export default function App() {
  return (
    <div className={`${FONT} flex h-screen flex-col overflow-hidden bg-[#f0f0f0] text-[13px] leading-[18px] text-[#222]`}>
      <header className="flex h-[26px] shrink-0 items-center bg-white text-[#999]">
        <Icon className="ml-0.5 h-[18px] w-[18px]"><PcbArt /></Icon>
        <span className="ml-1">Pcbnew — D:\ITB!\BAHAN KULIAH\Tahun 3\Internship\PT INTI\Arr E</span>
        <div className="mr-[23px] ml-auto flex items-center gap-[41px]">
          <button type="button" aria-label="Minimize"><svg viewBox="0 0 11 11" className="h-[11px] w-[11px]" stroke="#aaa"><path d="M0 5.500h11" /></svg></button>
          <button type="button" aria-label="Restore"><svg viewBox="0 0 11 11" className="h-[11px] w-[11px]" fill="none" stroke="#999"><path d="M.5 2.500h8v8h-8zM2.500 2.500v-2h8v8h-2" /></svg></button>
          <button type="button" aria-label="Close"><svg viewBox="0 0 11 11" className="h-[11px] w-[11px]" stroke="#999"><path d="M0 0l11 11M11 0L0 11" /></svg></button>
        </div>
      </header>

      <nav aria-label="Menu" className="flex h-5 shrink-0 items-center gap-3 bg-white pl-1.5 text-[#6a6a6a]">
        {['File', 'Edit', 'View', 'Place', 'Route', 'Inspect', 'Tools', 'Preferences', 'Help'].map((m) => (
          <button key={m} type="button">{m}</button>
        ))}
      </nav>

      <div className="flex h-9 shrink-0 items-center pl-[5px]">
        {topIcons.map((it, i) =>
          it ? (
            <button key={i} type="button" aria-label={it[0]} className="flex w-[30px] shrink-0 justify-center"><Icon>{it[1]}</Icon></button>
          ) : (
            <span key={i} className="flex w-2 justify-center"><span className="h-[22px] w-px bg-[#c4c4c4]" /></span>
          ),
        )}
      </div>

      <div className="flex h-[31px] shrink-0 gap-[3px] pt-0.5 pl-1">
        {[['Track width', 'Track: 0.300 mm (11.81 mils) *', 'w-[203px]'], ['Via size', 'Via: 1.00 / 0.60 mm (39.4 / 23.6 mils) *', 'w-[280px]']].map(([l, v, w]) => (
          <span key={l} className={`grid items-center ${w} h-[25px]`}>
            <select aria-label={l} className="col-start-1 row-start-1 h-full w-full appearance-none border border-[#b8b8b8] bg-[#e3e3e3] pl-[3px]">
              <option>{v}</option>
            </select>
            <span className="pointer-events-none col-start-1 row-start-1 mr-[3px] justify-self-end text-[#666]">
              <Chevron d={DOWN} w={1.2} className="h-[10px] w-[10px]" />
            </span>
          </span>
        ))}
      </div>

      <main className="flex min-h-0 flex-1">
        <div className="w-[33px] shrink-0 overflow-hidden pr-0.5"><SideBar items={leftIcons} label="Display options" /></div>
        <div className="grid min-h-0 min-w-0 flex-1 grid-cols-[minmax(0,1fr)_19px] grid-rows-[minmax(0,1fr)_19px]">
          <Board />
          <div className="flex flex-col items-center py-1 text-[#555]">
            <Chevron d={UP} />
            <span className="grow-[394]" />
            <span className="h-5 w-[17px] bg-[#cdcdcd]" />
            <span className="grow-[334]" />
            <Chevron d={DOWN} />
          </div>
          <div className="flex items-center px-0.5 text-[#555]">
            <Chevron d={LEFT} />
            <span className="grow-[755]" />
            <span className="h-[17px] w-[78px] bg-[#cdcdcd]" />
            <span className="grow-[584]" />
            <Chevron d={RIGHT} />
          </div>
        </div>
        <div className="w-8 shrink-0 overflow-hidden border-l border-white"><SideBar items={rightIcons} label="Tools" /></div>
        <LayersManager />
      </main>

      <div className="flex h-[17px] shrink-0 overflow-hidden pl-3">
        <span className="w-[62px]">Pads</span>
        <span className="w-[57px]">Vias</span>
        <span className="w-[127px]">Track Segments</span>
        <span className="w-[72px]">Nodes</span>
        <span className="w-[60px]">Nets</span>
        <span>Unrouted</span>
      </div>

      <Taskbar />

      <div className="absolute inset-x-0 top-2 flex justify-center pl-px">
        <div className="relative"><DrillDialog /></div>
      </div>
    </div>
  );
}
